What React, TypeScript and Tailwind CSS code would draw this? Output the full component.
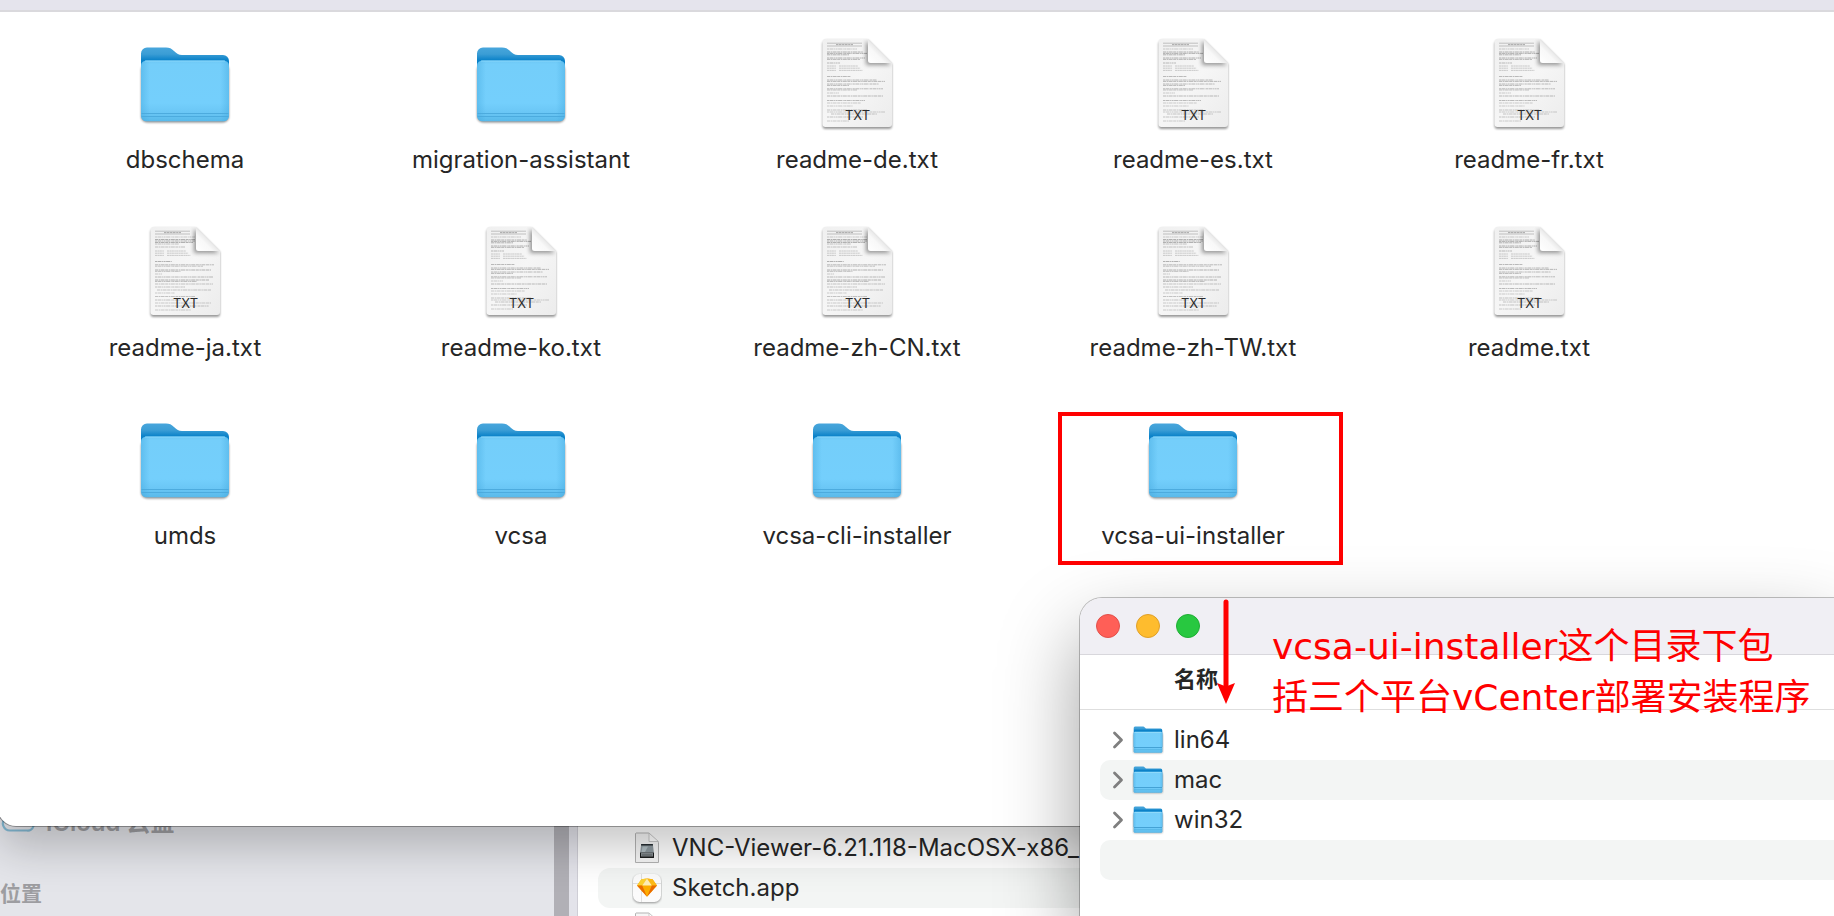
import React from "react";

type Entry = { name: string; kind: "folder" | "txt" };

const entries: Entry[] = [
  { name: "dbschema", kind: "folder" },
  { name: "migration-assistant", kind: "folder" },
  { name: "readme-de.txt", kind: "txt" },
  { name: "readme-es.txt", kind: "txt" },
  { name: "readme-fr.txt", kind: "txt" },
  { name: "readme-ja.txt", kind: "txt" },
  { name: "readme-ko.txt", kind: "txt" },
  { name: "readme-zh-CN.txt", kind: "txt" },
  { name: "readme-zh-TW.txt", kind: "txt" },
  { name: "readme.txt", kind: "txt" },
  { name: "umds", kind: "folder" },
  { name: "vcsa", kind: "folder" },
  { name: "vcsa-cli-installer", kind: "folder" },
  { name: "vcsa-ui-installer", kind: "folder" },
];

const platforms = ["lin64", "mac", "win32"];

/* Gradients shared by every icon on the page. */
function IconDefs() {
  return (
    <svg width="0" height="0" className="absolute" aria-hidden="true">
      <defs>
        <linearGradient id="folderBack" x1="0" y1="0" x2="0" y2="1">
          <stop offset="0" stopColor="#47a6dc" />
          <stop offset="0.1" stopColor="#3b9dd5" />
          <stop offset="0.19" stopColor="#0b82c9" />
          <stop offset="1" stopColor="#0b82c9" />
        </linearGradient>
        <linearGradient id="folderFront" x1="0" y1="0" x2="0" y2="1">
          <stop offset="0" stopColor="#6cc7f4" />
          <stop offset="0.06" stopColor="#74cefa" />
          <stop offset="0.7" stopColor="#74cffc" />
          <stop offset="0.86" stopColor="#6ac6f5" />
          <stop offset="1" stopColor="#58b9ea" />
        </linearGradient>
        <linearGradient id="folderSides" x1="0" y1="0" x2="1" y2="0">
          <stop offset="0" stopColor="#3fa5dc" stopOpacity="0.4" />
          <stop offset="0.1" stopColor="#3fa5dc" stopOpacity="0" />
          <stop offset="0.9" stopColor="#3fa5dc" stopOpacity="0" />
          <stop offset="1" stopColor="#3fa5dc" stopOpacity="0.4" />
        </linearGradient>
        <linearGradient id="paper" x1="0" y1="0" x2="1" y2="1">
          <stop offset="0" stopColor="#f0f0f0" />
          <stop offset="0.5" stopColor="#f6f6f6" />
          <stop offset="1" stopColor="#ececec" />
        </linearGradient>
        <linearGradient id="fold" x1="0" y1="1" x2="0.6" y2="0.4">
          <stop offset="0" stopColor="#ffffff" />
          <stop offset="0.6" stopColor="#f8f8f8" />
          <stop offset="1" stopColor="#dedede" />
        </linearGradient>
        <filter id="soft" x="-20%" y="-20%" width="140%" height="140%">
          <feGaussianBlur stdDeviation="1.2" />
        </filter>
        <filter id="softer" x="-40%" y="-40%" width="180%" height="180%">
          <feGaussianBlur stdDeviation="2.2" />
        </filter>
        <clipPath id="paperClip">
          <path d="M18.500 5H61L85 29V91a3 3 0 0 1-3 3H18.500a3 3 0 0 1-3-3V8a3 3 0 0 1 3-3Z" />
        </clipPath>
      </defs>
    </svg>
  );
}

function FolderIcon() {
  return (
    <svg viewBox="0 0 100 100" className="size-[100px]" aria-hidden="true">
      <rect x="6" y="30" width="88" height="58.500" rx="6" fill="#000" opacity="0.45" filter="url(#soft)" />
      <path d="M12 13.500H31c3.500 0 5.500 1.200 8 3.400C42 19.500 43.500 20.900 47 20.900H88a6 6 0 0 1 6 6V80H6V19.500a6 6 0 0 1 6-6Z" fill="url(#folderBack)" />
      <rect x="6" y="26.500" width="88" height="60.800" rx="5.500" fill="url(#folderFront)" />
      <rect x="6" y="26.500" width="88" height="60.800" rx="5.500" fill="url(#folderSides)" />
      <path d="M10 27H90" stroke="#93dcfd" strokeWidth="0.800" />
      <path d="M6.500 79.500H93.500M6.500 82.500H93.500" stroke="#4aa8db" strokeWidth="0.900" />
    </svg>
  );
}

function SmallFolderIcon() {
  return (
    <svg viewBox="0 0 32 30" className="h-[30px] w-8" aria-hidden="true">
      <rect x="1.500" y="8" width="29" height="20" rx="1.500" fill="#000" opacity="0.4" filter="url(#soft)" />
      <path d="M3 1.500H10.500c1.200 0 1.800.5 2.600 1.200.7.600 1.200.9 2.400.9H28.500A1.800 1.800 0 0 1 30.300 5.500V22H1.700V3A1.500 1.500 0 0 1 3 1.500Z" fill="url(#folderBack)" />
      <rect x="1.700" y="6.800" width="28.600" height="21" rx="1.500" fill="url(#folderFront)" />
      <rect x="1.700" y="6.800" width="28.600" height="21" rx="1.500" fill="url(#folderSides)" />
      <path d="M2.500 7.400H29.500" stroke="#9be0fd" strokeWidth="0.800" />
      <path d="M2 22.500H30" stroke="#3f9dd0" strokeWidth="0.900" />
      <path d="M2 24.700H30" stroke="#4fb0e0" strokeWidth="0.700" />
    </svg>
  );
}

/* Previewed lines as [y, start, end, opacity]. */
const lineSets: number[][][] = [
  [
    [15, 20, 50, 0.5], [18, 20, 56, 0.8], [19.400, 20, 60, 0.8], [20.800, 20, 42, 0.8], [24, 20, 58, 0.8], [25.400, 20, 53, 0.7],
    [29, 20, 33, 0.7], [42.500, 20, 44, 0.7], [46, 20, 70, 0.7], [47.400, 20, 78, 0.7], [50, 20, 72, 0.7], [51.400, 20, 42, 0.7],
    [54.800, 20, 76, 0.7], [56, 20, 50, 0.6], [59, 20, 32, 0.5], [62, 20, 76, 0.7], [66.500, 20, 58, 0.7], [69, 20, 54, 0.5],
    [72, 20, 46, 0.5], [76, 20, 60, 0.6], [78, 20, 78, 0.5], [80, 24, 70, 0.6], [83, 20, 56, 0.6], [87, 20, 42, 0.5],
  ],
  [
    [15, 20, 60, 0.5], [17.500, 20, 60, 0.8], [19, 20, 60, 0.8], [20.500, 20, 58, 0.8], [22, 20, 44, 0.6], [25, 20, 50, 0.6],
    [39.500, 20, 37, 0.8], [42.800, 20, 79, 0.7], [44.200, 20, 68, 0.6], [48, 20, 76, 0.8], [49.400, 20, 46, 0.6], [52, 20, 27, 0.5],
    [55, 20, 78, 0.7], [58, 20, 74, 0.8], [59.400, 20, 62, 0.7], [62, 20, 78, 0.6], [65, 20, 50, 0.6], [68, 22, 76, 0.6],
    [71, 20, 40, 0.5], [74.500, 20, 60, 0.6], [78, 20, 46, 0.6], [81, 20, 76, 0.5], [84, 20, 74, 0.6], [88, 20, 56, 0.5],
  ],
];

function TextFileIcon({ dense }: { dense: boolean }) {
  const lines = lineSets[dense ? 1 : 0];
  const tableTop = dense ? 29 : 32;
  return (
    <svg viewBox="0 0 100 100" className="size-[100px]" aria-hidden="true">
      <path d="M18.500 6H61L85 30V92a3 3 0 0 1-3 3H18.500a3 3 0 0 1-3-3V9Z" fill="#000" opacity="0.4" filter="url(#soft)" />
      <path d="M18.500 5H61L85 29V90a3 3 0 0 1-3 3H18.500a3 3 0 0 1-3-3V8a3 3 0 0 1 3-3Z" fill="url(#paper)" />
      <g clipPath="url(#paperClip)" stroke="#8a8a8a" fill="none">
        <path d="M20 9.200H55M20 12H55" strokeWidth="0.500" />
        <path d="M29 10.600H46" strokeWidth="0.700" strokeDasharray="2 0.5 3 0.6" />
        {lines.map(([y, a, b, o], i) => (
          <path
            key={y}
            d={`M${a} ${y}H${b}`}
            strokeWidth="0.800"
            strokeDasharray={i % 2 ? "3 0.6 1.5 0.5 4 0.6" : "2 0.5 4 0.6 1 0.5"}
            opacity={o}
          />
        ))}
        {[0, 2.200, 4.400].map((d) => (
          <path key={d} d={`M20 ${tableTop + d}H29M32 ${tableTop + d}H${51 + d}`} strokeWidth="0.800" strokeDasharray="2.3 0.4 1.6 0.3" opacity="0.5" />
        ))}
        <path d="M59 7V31H84L62 9Z" fill="#000" stroke="none" opacity="0.4" filter="url(#softer)" />
      </g>
      <path d="M61 5.400L84.700 29H63.500a2.500 2.500 0 0 1-2.500-2.500Z" fill="url(#fold)" />
      <text x="50.500" y="86" textAnchor="middle" fontSize="13" fill="#2b2b2b" fontFamily="Inter, sans-serif">
        TXT
      </text>
    </svg>
  );
}

function DiskImageIcon() {
  return (
    <svg viewBox="0 0 30 34" className="h-[34px] w-[30px]" aria-hidden="true">
      <path d="M4 2H16.500L26.500 11.500V31.500H3.500V2.500Z" fill="#f6f6f6" stroke="#b3b3b3" strokeWidth="1" />
      <path d="M17 2V10.500H26.500Z" fill="#fff" stroke="#bdbdbd" strokeWidth="0.800" />
      <path d="M9.200 13H20.800L22 22.500H8Z" fill="#8d999f" />
      <path d="M9.200 13H20.800L21 14.500H9Z" fill="#262d31" />
      <path d="M10.500 15.500H16L13 21H9.500Z" fill="#b9c5ca" opacity="0.8" />
      <rect x="8" y="21.500" width="14" height="5.500" rx="0.600" fill="#1a1c1d" />
      <rect x="9" y="21.500" width="12" height="4" fill="#858c90" />
      <path d="M10 24H20" stroke="#4c5255" strokeWidth="0.700" />
    </svg>
  );
}

function SketchIcon() {
  return (
    <svg viewBox="0 0 30 34" className="h-[34px] w-[30px]" aria-hidden="true">
      <rect x="1" y="4" width="28" height="28" rx="6.500" fill="#000" opacity="0.4" filter="url(#soft)" />
      <rect x="1" y="3" width="28" height="28" rx="6.500" fill="#fbfbfb" />
      <path d="M9.500 3V31M1 12.500H29" stroke="#d9d9d9" strokeWidth="0.800" />
      <path d="M9.400 8.200L15 7.500L20.600 8.200L25 14.500L15 25.800L5 14.500Z" fill="#fdad00" />
      <path d="M9.400 8.200L15 7.500L10.200 14.500H5Z" fill="#fdd231" />
      <path d="M20.600 8.200L15 7.500L19.800 14.500H25Z" fill="#fdbb18" />
      <path d="M15 7.500L19.800 14.500H10.200Z" fill="#feeeb7" />
      <path d="M5 14.500H10.200L15 25.800Z" fill="#ea6c00" />
      <path d="M25 14.500H19.800L15 25.800Z" fill="#ea6c00" />
    </svg>
  );
}

function PlainFileIcon() {
  return (
    <svg viewBox="0 0 30 34" className="h-[34px] w-[30px]" aria-hidden="true">
      <path d="M4 2H16.500L26.500 11.500V31.500H3.500V2.500Z" fill="#f6f6f6" stroke="#b3b3b3" strokeWidth="1" />
      <path d="M17 2V10.500H26.500Z" fill="#fff" stroke="#bdbdbd" strokeWidth="0.800" />
    </svg>
  );
}

function BackgroundWindow() {
  return (
    <section className="absolute inset-x-0 top-[788px] bottom-0 flex bg-[#e4e5ea]">
      <aside className="flex w-[554px] shrink-0 flex-col font-semibold text-[#9d9da1]">
        <div className="flex h-[70px] items-center gap-2.5 text-2xl">
          <svg viewBox="0 0 36 24" className="h-6 w-9" aria-hidden="true">
            <path d="M10 19.500A7 7 0 0 1 5 7.500 9 9 0 0 1 21 3a8 8 0 0 1 9 5 6 6 0 0 1-3 11.500Z" fill="none" stroke="#83b9d3" strokeWidth="2.200" />
          </svg>
          iCloud 云盘
        </div>
        <h2 className="pt-5 text-[21px] leading-8">位置</h2>
      </aside>
      <div className="w-[15px] shrink-0 bg-[#b1b0b6]" />
      <div className="w-[9px] shrink-0 border-r border-[#cfced6] bg-[#e3e3ea]" />
      <ul className="min-w-0 flex-1 overflow-hidden bg-white pt-10 pl-5 whitespace-nowrap">
        <li className="flex h-10 items-center gap-2.5 pl-[34px]">
          <DiskImageIcon />
          VNC-Viewer-6.21.118-MacOSX-x86_
        </li>
        <li className="flex h-10 items-center gap-2.5 rounded-l-xl bg-[#f3f5f4] pl-[34px]">
          <SketchIcon />
          Sketch.app
        </li>
        <li className="flex h-10 items-center pl-[34px]">
          <PlainFileIcon />
        </li>
      </ul>
    </section>
  );
}

function IconWindow() {
  return (
    <section className="absolute top-0 right-0 -left-0.5 h-[826px] overflow-visible rounded-bl-[18px] bg-white shadow-[0_0_0_1px_rgba(0,0,0,0.32),0_22px_44px_rgba(0,0,0,0.22)]">
      <div className="h-3 border-b-2 border-[#dad9dd] bg-[#e5e4ed]" />
      <ul className="grid grid-cols-[repeat(auto-fill,336px)] gap-y-[46px] pt-[22px] pl-[19px]">
        {entries.map((entry) => (
          <li key={entry.name} className="relative flex flex-col items-center gap-2.5">
            {entry.kind === "folder" ? <FolderIcon /> : <TextFileIcon dense={/ja|zh/.test(entry.name)} />}
            <span className="leading-8">{entry.name}</span>
            {entry.name === "vcsa-ui-installer" && (
              <div className="absolute top-0.5 left-[33px] h-[153px] w-[285px] border-4 border-[#ff0000]" />
            )}
          </li>
        ))}
      </ul>
    </section>
  );
}

function InstallerWindow() {
  return (
    <section className="absolute top-[598px] right-0 bottom-0 left-[1080px] rounded-tl-[22px] bg-white shadow-[0_0_0_1px_rgba(0,0,0,0.24),0_36px_80px_rgba(0,0,0,0.38)]">
      <header className="flex h-[57px] items-center gap-4 rounded-tl-[22px] border-b border-[#d8d7dc] bg-[#f0eff4] pl-4">
        <button type="button" aria-label="Close" className="size-6 rounded-full border border-[#e2504a] bg-[#ff5f57]" />
        <button type="button" aria-label="Minimize" className="size-6 rounded-full border border-[#e0a028] bg-[#febc2e]" />
        <button type="button" aria-label="Zoom" className="size-6 rounded-full border border-[#1fae34] bg-[#28c840]" />
      </header>
      <table className="w-full border-separate border-spacing-0 text-left">
        <thead>
          <tr>
            <th className="h-[55px] border-b border-[#dedede] p-0 pb-1 pl-[94px] text-[22px] font-semibold">名称</th>
          </tr>
        </thead>
        <tbody className="before:block before:h-2.5 before:content-['']">
          {platforms.map((name, i) => (
            <tr key={name}>
              <td className="p-0 pl-5">
                <div className={i % 2 ? "flex h-10 items-center rounded-l-[10px] bg-[#f3f5f4] pl-[11px]" : "flex h-10 items-center pl-[11px]"}>
                  <button type="button" aria-label={name} className="mr-[7px] flex h-6 w-[14px] items-center justify-center">
                    <svg viewBox="0 0 14 20" className="h-5 w-[14px]" aria-hidden="true">
                      <path d="M3.500 3L10.500 10L3.500 17" fill="none" stroke="#7f7f7f" strokeWidth="2.800" strokeLinecap="round" strokeLinejoin="round" />
                    </svg>
                  </button>
                  <SmallFolderIcon />
                  <span className="ml-2.5">{name}</span>
                </div>
              </td>
            </tr>
          ))}
          <tr>
            <td className="p-0 pl-5">
              <div className="h-10 rounded-l-[10px] bg-[#f3f5f4]" />
            </td>
          </tr>
        </tbody>
      </table>
    </section>
  );
}

function Annotation() {
  return (
    <>
      <svg viewBox="0 0 20 108" className="absolute top-[598px] left-[1216px] h-[108px] w-5" aria-hidden="true">
        <path d="M10 4V90" stroke="#ff0000" strokeWidth="5" strokeLinecap="round" />
        <path d="M10 106L1 85L10 88.500L19 85Z" fill="#ff0000" />
      </svg>
      <p className="absolute top-[621px] left-[1272px] font-['DejaVu_Sans','Noto_Sans_CJK_SC',sans-serif] text-4xl leading-[51px] whitespace-nowrap text-[#ff0000]">
        vcsa-ui-installer这个目录下包
        <br />
        括三个平台vCenter部署安装程序
      </p>
    </>
  );
}

export default function App() {
  return (
    <main className="relative min-h-screen overflow-hidden bg-[#e4e5ea] font-['Inter','Noto_Sans_CJK_SC',sans-serif] text-2xl text-[#262626]">
      <IconDefs />
      <BackgroundWindow />
      <IconWindow />
      <InstallerWindow />
      <Annotation />
    </main>
  );
}
